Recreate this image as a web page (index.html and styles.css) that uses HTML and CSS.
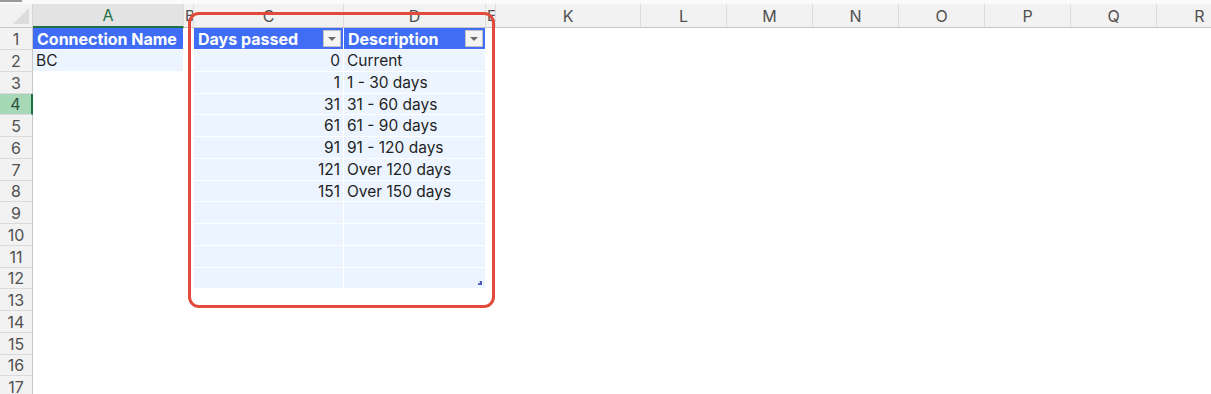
FILE: index.html
```html
<!DOCTYPE html>
<html>
<head>
<meta charset="utf-8">
<link rel="stylesheet" href="styles.css">
</head>
<body>
<div class="topstrip"><span class="topbar"></span></div>
<div class="sheet">
  <div class="row colhdr">
    <div class="corner"><span class="tri"></span></div>
    <div class="ch sel">A</div>
    <div class="ch narrow">B</div>
    <div class="ch">C</div>
    <div class="ch">D</div>
    <div class="ch narrow">E</div>
    <div class="ch">K</div>
    <div class="ch">L</div>
    <div class="ch">M</div>
    <div class="ch">N</div>
    <div class="ch">O</div>
    <div class="ch">P</div>
    <div class="ch">Q</div>
    <div class="ch">R</div>
  </div>

  <div class="row r22">
    <div class="rh">1</div>
    <div class="cell th">Connection Name</div>
    <div class="cell"></div>
    <div class="cell th">Days passed<span class="dd"></span></div>
    <div class="cell th">Description<span class="dd"></span></div>
  </div>
  <div class="row r22">
    <div class="rh">2</div>
    <div class="cell tb">BC</div>
    <div class="cell"></div>
    <div class="cell tb num">0</div>
    <div class="cell tb">Current</div>
  </div>
  <div class="row r22">
    <div class="rh">3</div>
    <div class="cell"></div>
    <div class="cell"></div>
    <div class="cell tb num">1</div>
    <div class="cell tb">1 - 30 days</div>
  </div>
  <div class="row r21">
    <div class="rh active">4</div>
    <div class="cell"></div>
    <div class="cell"></div>
    <div class="cell tb num">31</div>
    <div class="cell tb">31 - 60 days</div>
  </div>
  <div class="row r22">
    <div class="rh">5</div>
    <div class="cell"></div>
    <div class="cell"></div>
    <div class="cell tb num">61</div>
    <div class="cell tb">61 - 90 days</div>
  </div>
  <div class="row r22">
    <div class="rh">6</div>
    <div class="cell"></div>
    <div class="cell"></div>
    <div class="cell tb num">91</div>
    <div class="cell tb">91 - 120 days</div>
  </div>
  <div class="row r22">
    <div class="rh">7</div>
    <div class="cell"></div>
    <div class="cell"></div>
    <div class="cell tb num">121</div>
    <div class="cell tb">Over 120 days</div>
  </div>
  <div class="row r21">
    <div class="rh">8</div>
    <div class="cell"></div>
    <div class="cell"></div>
    <div class="cell tb num">151</div>
    <div class="cell tb">Over 150 days</div>
  </div>
  <div class="row r22">
    <div class="rh">9</div>
    <div class="cell"></div>
    <div class="cell"></div>
    <div class="cell tb"></div>
    <div class="cell tb"></div>
  </div>
  <div class="row r22">
    <div class="rh">10</div>
    <div class="cell"></div>
    <div class="cell"></div>
    <div class="cell tb"></div>
    <div class="cell tb"></div>
  </div>
  <div class="row r22">
    <div class="rh">11</div>
    <div class="cell"></div>
    <div class="cell"></div>
    <div class="cell tb"></div>
    <div class="cell tb"></div>
  </div>
  <div class="row r21">
    <div class="rh">12</div>
    <div class="cell"></div>
    <div class="cell"></div>
    <div class="cell tb"></div>
    <div class="cell tb last"><span class="grip"></span></div>
  </div>
  <div class="row r22"><div class="rh">13</div></div>
  <div class="row r22"><div class="rh">14</div></div>
  <div class="row r22"><div class="rh">15</div></div>
  <div class="row r21"><div class="rh">16</div></div>
  <div class="row r22"><div class="rh">17</div></div>

  <div class="highlight"></div>
</div>
</body>
</html>
```

FILE: styles.css
```css
* { box-sizing: border-box; }
html, body {
  margin: 0;
  padding: 0;
  background: #ffffff;
  overflow: hidden;
}
body {
  font-family: "Inter", "Noto Sans", "Liberation Sans", sans-serif;
  font-size: 15.5px;
  color: #222;
  width: 1211px;
  height: 394px;
}
.topstrip {
  height: 4px;
  background: #fafafa;
}
.topbar {
  display: block;
  width: 22px;
  height: 2px;
  background: #9a9a9a;
}
.sheet {
  position: relative;
  width: 1211px;
  overflow: hidden;
}
.row {
  display: grid;
  grid-template-columns: 33px 151px 10px 150px 142px 10px 145px 86px 86px 86px 86px 86px 86px 86px;
}
.r22 { height: 22px; }
.r21 { height: 21px; }

/* column headers */
.colhdr {
  height: 24px;
  background: #f2f2f2;
  border-bottom: 1px solid #c6c6c6;
}
.corner {
  position: relative;
  background: #f2f2f2;
  border-right: 1px solid #d4d4d4;
}
.tri {
  position: absolute;
  right: 3px;
  bottom: 3px;
  width: 0;
  height: 0;
  border-left: 16px solid transparent;
  border-bottom: 16px solid #dcdcdc;
}
.ch {
  display: flex;
  align-items: center;
  justify-content: center;
  color: #505050;
  font-size: 16px;
  border-right: 1px solid #dcdcdc;
  overflow: hidden;
  white-space: nowrap;
}
.ch.narrow {
  justify-content: flex-start;
  padding-left: 1px;
  font-size: 15px;
}
.ch.sel {
  background: #e3e3e3;
  color: #1e7145;
  border-bottom: 2px solid #1e7145;
  margin-bottom: -1px;
}

/* row headers */
.rh {
  display: flex;
  align-items: center;
  justify-content: center;
  background: #f2f2f2;
  color: #505050;
  font-size: 16px;
  border-right: 1px solid #c6c6c6;
  border-bottom: 1px solid #dadada;
}
.rh.active {
  background: #a6d8b8;
  color: #2f4f3d;
  border-right: 2px solid #1e7145;
}

/* cells */
.cell {
  position: relative;
  display: flex;
  align-items: center;
  padding: 0 3px;
  white-space: nowrap;
  overflow: visible;
  font-size: 15.5px;
  color: #1f1f1f;
}
.cell.th {
  background: #3f6df6;
  color: #ffffff;
  font-weight: 700;
  font-size: 16px;
  border-bottom: 1px solid #ffffff;
  border-right: 1px solid #ffffff;
  padding-left: 4px;
}
.cell.tb {
  background: #ebf4ff;
  border-bottom: 1px solid #ffffff;
  border-right: 1px solid #ffffff;
}
.cell.num {
  justify-content: flex-end;
}
.dd {
  position: absolute;
  right: 2px;
  top: 2px;
  width: 18px;
  height: 17px;
  background: #f4f4f4;
  border: 1px solid #c3c3c3;
}
.dd::after {
  content: "";
  position: absolute;
  left: 4px;
  top: 6px;
  border-left: 4px solid transparent;
  border-right: 4px solid transparent;
  border-top: 4px solid #6b6b6b;
}
.grip {
  position: absolute;
  right: 3px;
  bottom: 3px;
  width: 4px;
  height: 4px;
  background: #4b5bb8;
  clip-path: polygon(100% 0, 100% 100%, 0 100%, 0 55%, 45% 55%, 45% 0);
}

/* red annotation box */
.highlight {
  position: absolute;
  left: 188px;
  top: 8px;
  width: 307px;
  height: 296px;
  border: 3px solid #e24a3b;
  border-radius: 11px;
  pointer-events: none;
}
```
